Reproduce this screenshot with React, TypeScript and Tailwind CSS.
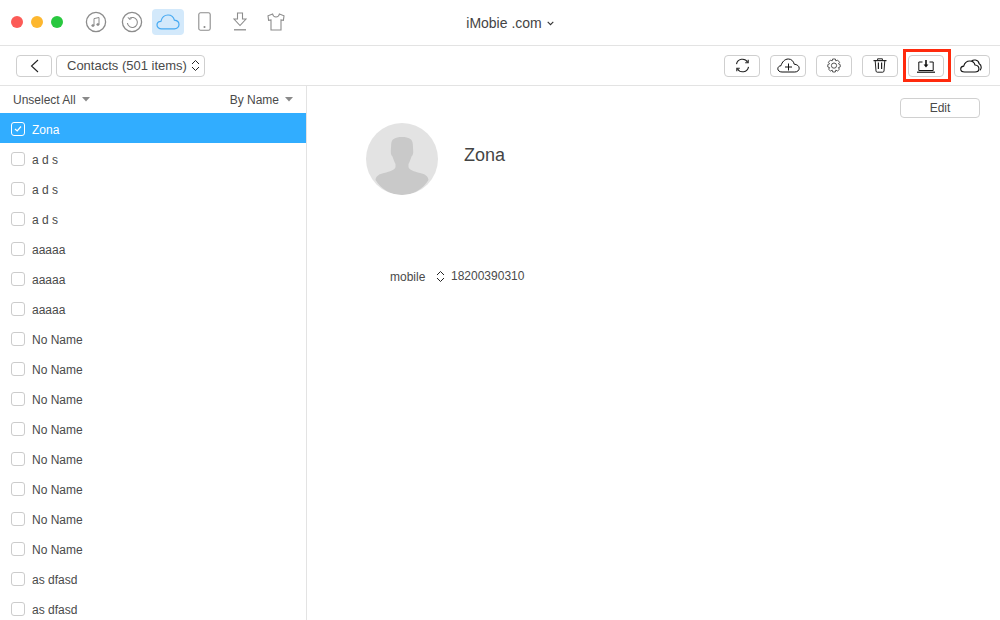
import React from 'react';

const contacts = [
  'a d s', 'a d s', 'a d s',
  'aaaaa', 'aaaaa', 'aaaaa',
  'No Name', 'No Name', 'No Name', 'No Name', 'No Name', 'No Name', 'No Name', 'No Name',
  'as dfasd', 'as dfasd',
];

// up/down chevrons used by the selects
const Updown = ({ className = '' }: { className?: string }) => (
  <svg width="9" height="13" viewBox="0 0 9 13" fill="none" stroke="#222" strokeWidth="1" className={className}>
    <path d="M1 5L4.5 1.5L8 5" />
    <path d="M1 8L4.5 11.5L8 8" />
  </svg>
);

const Caret = () => (
  <svg width="8" height="5" viewBox="0 0 8 5" fill="#8a8a8a">
    <path d="M0 0H8L4 4.5Z" />
  </svg>
);

const TopIcons = () => (
  <div className="flex items-center ml-[16px] h-[26px]">
    {/* music */}
    <div className="w-[36px] flex justify-center">
      <svg width="22" height="22" viewBox="0 0 22 22" fill="none" stroke="#8c8c8c">
        <circle cx="11" cy="11" r="9.6" strokeWidth="1.3" />
        <path d="M9 14.5V7.6L14 6.5V13.4" strokeWidth="1" />
        <ellipse cx="7.9" cy="14.6" rx="1.3" ry="1" fill="#8c8c8c" strokeWidth="0.6" />
        <ellipse cx="12.9" cy="13.5" rx="1.3" ry="1" fill="#8c8c8c" strokeWidth="0.6" />
      </svg>
    </div>
    {/* restore */}
    <div className="w-[36px] flex justify-center">
      <svg width="22" height="22" viewBox="0 0 22 22" fill="none" stroke="#8c8c8c">
        <circle cx="11" cy="11" r="9.6" strokeWidth="1.3" />
        <path d="M8.2 7.6A5 5 0 1 1 6.4 12" strokeWidth="1.1" />
        <path d="M7 6.2L8.4 8.4L10.6 7.6" strokeWidth="1" />
      </svg>
    </div>
    {/* cloud, the active one */}
    <div className="w-[32px] h-[26px] ml-[2px] rounded-[4px] bg-[#d3e9fb] flex items-center justify-center">
      <svg width="24" height="16" viewBox="0 0 24 16" fill="none" stroke="#45a9f2" strokeWidth="1.2">
        <path d="M5.5 14.8C3 14.8 1 13.2 1 11C1 8.9 2.7 7.4 4.9 7.3C5.8 3.6 8.6 1 12 1C15.4 1 17.7 3.2 18.4 6.2C20.9 6.5 23 8.2 23 10.6C23 13 21 14.8 18.4 14.8Z" />
      </svg>
    </div>
    {/* device */}
    <div className="w-[40px] flex justify-center">
      <svg width="13" height="19" viewBox="0 0 13 19" fill="none" stroke="#8c8c8c" strokeWidth="1.1">
        <rect x="0.8" y="0.8" width="11.4" height="17.4" rx="1.8" />
        <circle cx="6.5" cy="15" r="0.5" fill="#8c8c8c" />
      </svg>
    </div>
    {/* download */}
    <div className="w-[32px] flex justify-center">
      <svg width="14" height="19" viewBox="0 0 14 19" fill="none" stroke="#8c8c8c" strokeWidth="1.1">
        <path d="M4.5 1H9.5V7H13L7 13.5L1 7H4.5Z" />
        <path d="M1 17.8H13" strokeWidth="1.3" />
      </svg>
    </div>
    {/* tshirt */}
    <div className="w-[40px] flex justify-center">
      <svg width="18" height="18" viewBox="0 0 18 18" fill="none" stroke="#8c8c8c" strokeWidth="1.1">
        <path d="M5.6 1L1 2.8L1.6 7.4L4 7V17H14V7L16.4 7.4L17 2.8L12.4 1C12 3 10.5 4 9 4C7.5 4 6 3 5.6 1Z" />
      </svg>
    </div>
  </div>
);

const ToolButton = ({ children }: { children: React.ReactNode }) => (
  <button className="w-[36px] h-[22px] rounded-[4px] border border-[#cfcfcf] bg-white flex items-center justify-center">
    {children}
  </button>
);

const Checkbox = ({ checked = false }: { checked?: boolean }) => (
  <span
    className={`w-[14px] h-[14px] mt-[2px] rounded-[3px] border flex items-center justify-center shrink-0 ${
      checked ? 'border-white' : 'border-[#cccccc] bg-white'
    }`}
  >
    {checked && (
      <svg width="10" height="8" viewBox="0 0 10 8" fill="none" stroke="white" strokeWidth="1.2">
        <path d="M2 4L4.2 6L8 1.5" />
      </svg>
    )}
  </span>
);

const App = () => {
  return (
    <div
      className="w-[1000px] h-[620px] bg-white flex flex-col overflow-hidden text-[12px] text-[#4a4a4a]"
      style={{ fontFamily: '"Liberation Sans", Arial, sans-serif' }}
    >
      {/* title bar */}
      <div className="h-[46px] shrink-0 border-b border-[#e3e3e3] flex items-center relative">
        <div className="flex items-center gap-[8px] ml-[11px] mb-[2px]">
          <span className="w-[12px] h-[12px] rounded-full bg-[#fc5b57]" />
          <span className="w-[12px] h-[12px] rounded-full bg-[#fdb72f]" />
          <span className="w-[12px] h-[12px] rounded-full bg-[#29c83f]" />
        </div>
        <div className="mb-[2px] ml-[-1px]">
          <TopIcons />
        </div>
        <div className="absolute left-0 right-0 top-[14px] flex items-center justify-center gap-[5px] text-[14px] leading-[18px] text-[#444444] pl-[20px]">
          <span>iMobie .com</span>
          <svg width="7" height="5" viewBox="0 0 7 5" fill="none" stroke="#333" strokeWidth="1.1">
            <path d="M0.7 0.8L3.5 3.6L6.3 0.8" />
          </svg>
        </div>
      </div>

      {/* toolbar */}
      <div className="h-[40px] shrink-0 border-b border-[#e3e3e3] flex items-center justify-between pl-[16px] pr-[10px] relative">
        <div className="flex items-center gap-[4px]">
          <button className="w-[36px] h-[22px] rounded-[4px] border border-[#cfcfcf] flex items-center justify-center">
            <svg width="9" height="14" viewBox="0 0 9 14" fill="none" stroke="#222" strokeWidth="1.1">
              <path d="M8 1L1.5 7L8 13" />
            </svg>
          </button>
          <button className="w-[149px] h-[22px] rounded-[4px] border border-[#cfcfcf] flex items-center pl-[10px] gap-[4px] text-[13px] text-[#4a4a4a]">
            <span className="mt-[1px]">Contacts (501 items)</span>
            <Updown />
          </button>
        </div>
        <div className="flex items-center gap-[10px]">
          <ToolButton>
            <svg width="15" height="15" viewBox="0 0 15 15" fill="none" stroke="#222" strokeWidth="1.1">
              <path d="M1.5 6.2A6 6 0 0 1 12.6 4.2" />
              <path d="M13.5 8.8A6 6 0 0 1 2.4 10.8" />
              <path d="M13.2 1.8V4.8H10.2" />
              <path d="M1.8 13.2V10.2H4.8" />
            </svg>
          </ToolButton>
          <ToolButton>
            <svg width="23" height="15" viewBox="0 0 23 15" fill="none" stroke="#111" strokeWidth="1">
              <path d="M5 14C2.5 14 0.8 12.6 0.8 10.8C0.8 9.1 2.2 7.8 4 7.7C5 4 7.8 1 11.3 1C14.6 1 16.6 3.4 17.2 6.2C20 6.4 22.2 8 22.2 10.2C22.2 12.4 20.3 14 17.8 14Z" />
              <path d="M11.5 5.5V12.5M8 9H15" />
            </svg>
          </ToolButton>
          <ToolButton>
            <svg width="14" height="15" viewBox="0 0 14 15" fill="none" stroke="#555" strokeWidth="1">
              <path d="M5.6 1H8.4L8.8 2.9L10.6 2.1L12.6 4.3L11.4 5.8L13.2 6.6V9L11.4 9.6L12.4 11.3L10.5 13L8.8 12.1L8.3 14H5.7L5.2 12.1L3.5 13L1.6 11.3L2.6 9.6L0.8 9V6.6L2.6 5.8L1.4 4.3L3.4 2.1L5.2 2.9Z" />
              <circle cx="7" cy="7.6" r="2.6" />
            </svg>
          </ToolButton>
          <ToolButton>
            <svg width="14" height="15" viewBox="0 0 14 15" fill="none" stroke="#222" strokeWidth="1">
              <path d="M0.5 2.6H13.5" strokeWidth="1.2" />
              <path d="M4.6 2.4V0.8H9.4V2.4" />
              <path d="M2.2 2.8L3 13C3.1 13.8 3.6 14.2 4.2 14.2H9.8C10.4 14.2 10.9 13.8 11 13L11.8 2.8" />
              <path d="M5.4 4.5V11M8.6 4.5V11" strokeWidth="1.2" />
            </svg>
          </ToolButton>
          <ToolButton>
            <svg width="18" height="14" viewBox="0 0 18 14" fill="none" stroke="#111" strokeWidth="1">
              <path d="M5.5 3H1.8V11.5H16.2V3H12.5" />
              <path d="M0 13.2H18" strokeWidth="1.2" />
              <path d="M9 1V6.5" strokeWidth="1.6" />
              <path d="M6.6 5.6H11.4L9 8.4Z" fill="#111" stroke="none" />
            </svg>
          </ToolButton>
          <ToolButton>
            <svg width="24" height="14" viewBox="0 0 24 14" fill="none" stroke="#111" strokeWidth="1.1">
              <path d="M4.6 13C2.3 13 0.7 11.7 0.7 10C0.7 8.3 2 7.2 3.7 7.1C4.6 3.8 7 2 9.8 2C12.6 2 14.4 3.6 15 6C17.3 6.2 18.9 7.8 18.9 9.7C18.9 11.6 17.3 13 15 13Z" />
              <path d="M11.5 2.2C12.5 1.2 14 0.8 15.4 1C17.4 1.3 18.8 2.8 19.2 4.8C20.4 5.4 21.2 6.8 21.2 8.2C21.2 9.4 20.8 10.6 19.9 11.4" />
            </svg>
          </ToolButton>
        </div>
        {/* red highlight over the export button */}
        <div className="absolute left-[903px] top-[3px] w-[48px] h-[33px] border-[3px] border-[#ff2a0d] pointer-events-none" />
      </div>

      <div className="flex flex-1 min-h-0">
        {/* contact list */}
        <div className="w-[307px] shrink-0 border-r border-[#e3e3e3] flex flex-col overflow-hidden">
          <div className="h-[27px] shrink-0 flex items-center justify-between pl-[13px] pr-[13px]">
            <span className="flex items-center gap-[6px]">
              Unselect All <Caret />
            </span>
            <span className="flex items-center gap-[6px]">
              By Name <Caret />
            </span>
          </div>
          <div className="h-[30px] shrink-0 bg-[#31adff] flex items-center pl-[11px] gap-[7px] text-white">
            <Checkbox checked />
            <span className="mt-[4px]">Zona</span>
          </div>
          {contacts.map((name, i) => (
            <div key={i} className="h-[30px] shrink-0 flex items-center pl-[11px] gap-[7px]">
              <Checkbox />
              <span className="mt-[4px]">{name}</span>
            </div>
          ))}
        </div>

        {/* contact details */}
        <div className="flex-1 flex flex-col min-w-0">
          <div className="flex justify-end pt-[12px] pr-[20px]">
            <button className="w-[80px] h-[20px] rounded-[4px] border border-[#d0d0d0] text-[12px] text-[#4a4a4a] flex items-center justify-center">
              Edit
            </button>
          </div>
          <div className="flex pl-[59px] mt-[5px]">
            <div className="w-[72px] h-[72px] rounded-full bg-[#e3e3e3] overflow-hidden shrink-0">
              <svg width="72" height="72" viewBox="0 0 72 72" fill="#c9c9c9">
                <path d="M36 14C29 14 25.5 16 25.2 21L24.8 28C24.6 31 25.5 32.5 26.5 33.5C27.5 37 28.5 39 29.5 41L29.5 44C29 47 24 48.5 18 50C13 51 10 53 9.5 57C15 66 25 72 36 72C47 72 57 66 62.5 57C62 53 59 51 54 50C48 48.5 43 47 42.5 44L42.5 41C43.5 39 44.5 37 45.5 33.5C46.5 32.5 47.4 31 47.2 28L46.8 21C46.5 16 43 14 36 14Z" />
              </svg>
            </div>
            <div className="ml-[26px] mt-[21px] text-[18px] leading-[22px] text-[#444444]">Zona</div>
          </div>
          <div className="flex items-center pl-[83px] mt-[72px] h-[18px]">
            <span className="w-[46px] mt-[1px]">mobile</span>
            <Updown />
            <span className="ml-[6px] mt-[-1px]">18200390310</span>
          </div>
        </div>
      </div>
    </div>
  );
};

export default App;
